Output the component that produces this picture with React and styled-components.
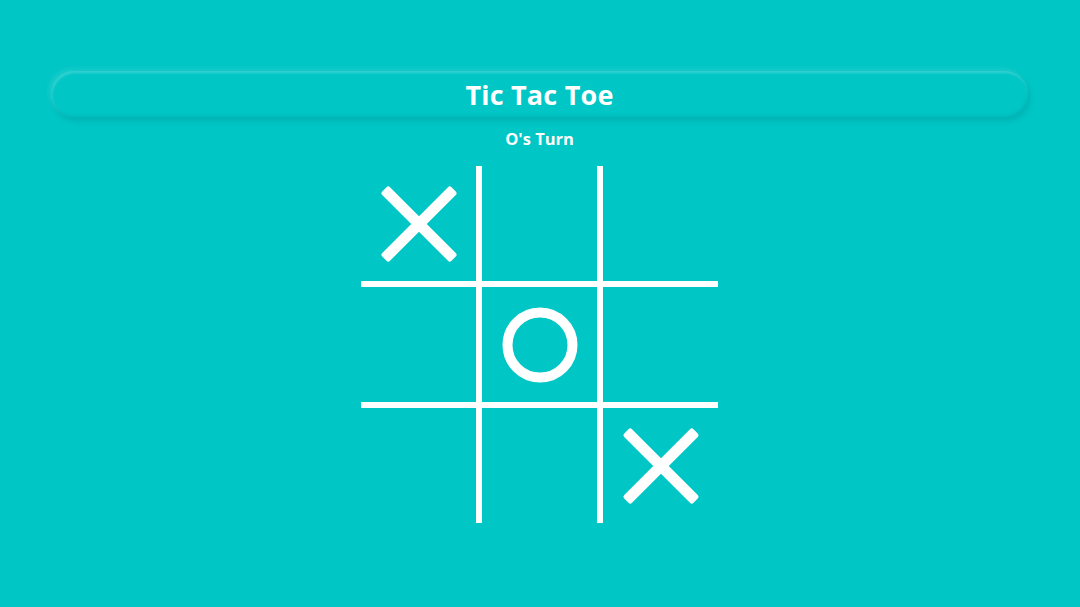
import React from 'react'
import styled, { createGlobalStyle } from 'styled-components'

const board = ['X', '', '', '', 'O', '', '', '', 'X']

const GlobalStyle = createGlobalStyle`
  html, body {
    margin: 0;
    padding: 0;
    background: #00c6c6;
  }
  body {
    font-family: "Open Sans", "Noto Sans", "Liberation Sans", sans-serif;
  }
`

const Page = styled.div`
  width: 1080px;
  height: 607px;
  box-sizing: border-box;
  padding: 71px 52px 0 51px;
  display: flex;
  flex-direction: column;
  align-items: center;
  overflow: hidden;
`

const Header = styled.div`
  width: 100%;
  height: 46px;
  border-radius: 23px;
  display: flex;
  align-items: center;
  justify-content: center;
  background: #00c6c6;
  box-shadow: inset 1px 2px 3px rgba(255, 255, 255, 0.22),
    inset -1px -2px 3px rgba(0, 0, 0, 0.05), 2px 4px 6px rgba(0, 0, 0, 0.1),
    -2px -2px 5px rgba(255, 255, 255, 0.12);
`

const Title = styled.h1`
  margin: 0;
  color: #fff;
  font-size: 27px;
  font-weight: 700;
  letter-spacing: 0.2px;
`

const Status = styled.div`
  margin-top: 10px;
  height: 24px;
  color: #fff;
  font-size: 16.5px;
  font-weight: 700;
  line-height: 24px;
`

const Grid = styled.div`
  margin-top: 15px;
  display: grid;
  grid-template-columns: repeat(3, 115px);
  grid-template-rows: repeat(3, 115px);
  gap: 6px;
  background: #fff;
`

const Cell = styled.div`
  background: #00c6c6;
  display: flex;
  align-items: center;
  justify-content: center;
`

const Cross = () => (
  <svg width="78" height="78" viewBox="0 0 78 78">
    <g fill="#fff" transform="translate(39 39) rotate(45)">
      <rect x="-49" y="-5.5" width="98" height="11" rx="2.5" />
      <rect x="-5.5" y="-49" width="11" height="98" rx="2.5" />
    </g>
  </svg>
)

const Nought = () => (
  <svg width="78" height="78" viewBox="0 0 78 78">
    <circle cx="39" cy="39" r="32.5" fill="none" stroke="#fff" strokeWidth="10" />
  </svg>
)

export default function App() {
  return (
    <Page>
      <GlobalStyle />
      <Header>
        <Title>Tic Tac Toe</Title>
      </Header>
      <Status>O's Turn</Status>
      <Grid>
        {board.map((mark, i) => (
          <Cell key={i}>
            {mark === 'X' && <Cross />}
            {mark === 'O' && <Nought />}
          </Cell>
        ))}
      </Grid>
    </Page>
  )
}
